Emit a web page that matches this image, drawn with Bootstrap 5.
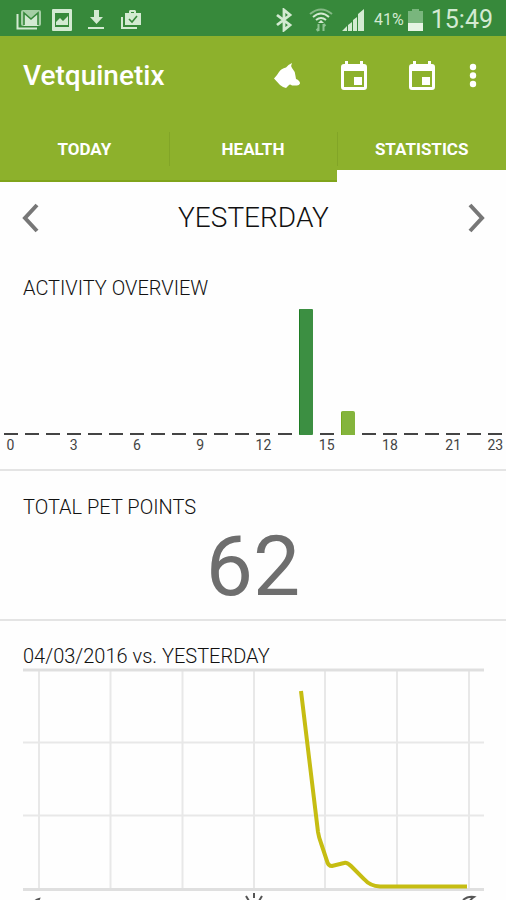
<!DOCTYPE html>
<html lang="en">
<head>
<meta charset="utf-8">
<meta name="viewport" content="width=device-width, initial-scale=1">
<title>Vetquinetix</title>
<link href="https://cdn.jsdelivr.net/npm/bootstrap@5.3.0/dist/css/bootstrap.min.css" rel="stylesheet">
<style>
  body { font-family: Roboto, "Noto Sans", sans-serif; color: #333; background: #fefefe; }
  svg { display: block; flex-shrink: 0; }
  .status-bar { height: 36px; background: #37893b; color: #d3ead2; padding: 3px 13px 0 16px; }
  .status-icons { gap: 10px; }
  .battery-text { font-size: 16px; line-height: 20px; }
  .clock { font-size: 25px; line-height: 32px; }
  .app-header { background: #8db12c; color: #fff; }
  .app-bar { height: 80px; padding: 0 20px 0 23px; }
  .app-title { font-size: 28px; line-height: 32px; font-weight: 500; }
  .icon-btn { color: inherit; line-height: 1; }
  .calendar-btn { margin-left: 40px; }
  .more-btn { margin-left: 24px; }
  .tab-item { height: 66px; padding: 2px 0 0; color: #fff; font-size: 17px; line-height: 20px; font-weight: 700; border-bottom: 2px solid #80a41b; }
  .tab-item + .tab-item { background: linear-gradient(#82a527, #82a527) 0 16px / 1px 34px no-repeat; }
  .tab-item.active { padding-top: 12px; border-bottom: 12px solid #fefefe; }
  .content { scrollbar-width: none; }
  .content::-webkit-scrollbar { display: none; }
  .date-bar { height: 69px; padding: 2px 19px 0 20px; color: #111; }
  .date-title { font-size: 28px; line-height: 36px; font-weight: 300; }
  .panel { border-bottom: 2px solid #e4e4e4; }
  .panel-title { font-size: 20px; line-height: 24px; padding: 0 23px; font-weight: 300; color: #111; }
  .activity { padding-top: 25px; padding-bottom: 14px; }
  .bars { height: 127px; margin-top: 8px; }
  .slot { flex: 1 1 0; width: 0; }
  .bar { width: 14px; height: 2px; background: #444; }
  .bar-high { background: #3c8f42; border-left: 1px solid #1f7c25; border-radius: 1px; }
  .bar-low { background: #84b43c; border-left: 1px solid #78a81d; border-radius: 2px 2px 0 0; }
  .hour { font-size: 14px; line-height: 20px; color: #444; }
  .points { padding-top: 24px; padding-bottom: 4px; }
  .points-value { font-size: 84px; line-height: 96px; color: #6e6e6e; }
  .compare { padding-top: 23px; }
  .plot { padding: 0 22px 0 23px; }
</style>
</head>
<body>
<div class="vh-100 d-flex flex-column overflow-hidden">
  <div class="status-bar flex-shrink-0 d-flex align-items-center justify-content-between">
    <div class="status-icons d-flex align-items-center">
      <svg width="26" height="22" viewBox="0 0 26 22" aria-hidden="true"><path d="M1.500 5v14.500H21" fill="none" stroke="#d3ead2" stroke-width="2"/><rect x="5" y="1" width="20" height="16" rx="2" fill="#a5cfa5"/><path d="M8 17V4l7 6 7-6v13" fill="#d3ead2"/><path d="M8 16V4l7 6 7-6v12" fill="none" stroke="#37893b" stroke-width="1.600"/></svg>
      <svg width="20" height="22" viewBox="0 0 20 22" aria-hidden="true"><path fill="#d3ead2" fill-rule="evenodd" d="M1 0h18a1 1 0 0 1 1 1v20a1 1 0 0 1-1 1H1a1 1 0 0 1-1-1V1a1 1 0 0 1 1-1zM3 4v14h14V4zM4 16v-3l4-4 3 3 5-5v9z"/></svg>
      <svg class="ms-1" width="20" height="22" viewBox="0 0 20 22" aria-hidden="true"><path fill="#d3ead2" d="M8 1h5v7h4l-6.500 7L4 8h4zM2 18h16v2H2z"/></svg>
      <svg class="ms-1" width="22" height="22" viewBox="0 0 22 22" aria-hidden="true"><path d="M2 8v11h15" fill="none" stroke="#d3ead2" stroke-width="2"/><path fill="#d3ead2" fill-rule="evenodd" d="M5 4h4V2l1-1h5l1 1v2h5v12H5zM11 4h3V3h-3z"/><path d="m9 10 3 3 5-6" fill="none" stroke="#37893b" stroke-width="1.600"/></svg>
    </div>
    <div class="d-flex align-items-center">
      <svg width="18" height="24" viewBox="0 0 18 24" aria-hidden="true"><path d="m2 7 13 10-6 5V2l6 5L2 17" fill="none" stroke="#d3ead2" stroke-width="2.800"/></svg>
      <svg class="ms-3" width="24" height="26" viewBox="0 0 24 26" aria-hidden="true"><g fill="none" stroke="#d3ead2" stroke-width="2"><path d="M1 7q11-9 22 0" opacity=".5"/><path d="M4 10q8-7 16 0M7 13q5-4 10 0"/></g><path d="M12 13l3 3h-6z" fill="#d3ead2"/><path d="M9.500 17v7m-2-2 2 2M14.500 24v-7m2 2-2-2" fill="none" stroke="#8fc493" stroke-width="2"/></svg>
      <svg class="ms-2" width="25" height="24" viewBox="0 0 25 24" aria-hidden="true"><path fill="#d3ead2" d="m1 23 5-5v5zM7 17l4-3v9H7zM12 12l4-3v14h-4zM17 6l6-5v22h-6z"/></svg>
      <span class="battery-text ms-2">41%</span>
      <svg class="ms-1" width="15" height="24" viewBox="0 0 15 24" aria-hidden="true"><path fill="#79b67d" d="M0 3h4V1h7v2h4v12H0z"/><path fill="#e6f4e4" d="M0 15h15v8H0z"/></svg>
      <span class="clock ms-2">15:49</span>
    </div>
  </div>

  <header class="app-header flex-shrink-0">
    <div class="app-bar d-flex align-items-center">
      <h1 class="app-title m-0 me-auto">Vetquinetix</h1>
      <button type="button" class="icon-btn btn p-0 border-0" aria-label="Pet"><svg width="26" height="26" viewBox="0 0 26 26"><path fill="currentColor" d="M18 0Q16.500 2.500 18 5Q21 8 21.500 13L22 16Q26 17.500 26 20.500Q25 23 22 22.500H18Q16 21 15 22L12 25Q9 24.500 6 22L0 15.500Q3 12.500 5 9Q7 5.500 12 4.500Q14 1.500 18 0Z"/></svg></button>
      <button type="button" class="icon-btn calendar-btn btn p-0 border-0" aria-label="Choose start date"><svg width="28" height="30" viewBox="0 0 28 30"><path fill="currentColor" fill-rule="evenodd" d="M5 0h3v3h12V0h3v3h1q3 0 3 3v20q0 3-3 3H4q-3 0-3-3V6q0-3 3-3h1zM4 10v16h20V10z"/><path fill="currentColor" d="M14 16h8v8h-8z"/></svg></button>
      <button type="button" class="icon-btn calendar-btn btn p-0 border-0" aria-label="Choose end date"><svg width="28" height="30" viewBox="0 0 28 30"><path fill="currentColor" fill-rule="evenodd" d="M5 0h3v3h12V0h3v3h1q3 0 3 3v20q0 3-3 3H4q-3 0-3-3V6q0-3 3-3h1zM4 10v16h20V10z"/><path fill="currentColor" d="M14 16h8v8h-8z"/></svg></button>
      <button type="button" class="icon-btn more-btn btn p-0 border-0" aria-label="More options"><svg width="26" height="28" viewBox="0 0 26 28"><g fill="currentColor"><circle cx="13" cy="5" r="3.200"/><circle cx="13" cy="13.500" r="3.200"/><circle cx="13" cy="22" r="3.200"/></g></svg></button>
    </div>
    <nav class="d-flex" aria-label="Sections">
      <a href="#today" class="tab-item w-100 d-flex align-items-center justify-content-center text-decoration-none">TODAY</a>
      <a href="#health" class="tab-item w-100 d-flex align-items-center justify-content-center text-decoration-none">HEALTH</a>
      <a href="#statistics" class="tab-item active w-100 d-flex align-items-center justify-content-center text-decoration-none" aria-current="page">STATISTICS</a>
    </nav>
  </header>

  <main class="content flex-grow-1 overflow-auto">
    <div class="date-bar d-flex align-items-center justify-content-between">
      <button type="button" class="icon-btn btn p-0 border-0" aria-label="Previous day"><svg width="20" height="30" viewBox="0 0 20 30"><path d="M17 2 5 15l12 13" fill="none" stroke="#777" stroke-width="4"/></svg></button>
      <h2 class="date-title m-0">YESTERDAY</h2>
      <button type="button" class="icon-btn btn p-0 border-0" aria-label="Next day"><svg width="20" height="30" viewBox="0 0 20 30"><path d="m3 2 12 13L3 28" fill="none" stroke="#777" stroke-width="4"/></svg></button>
    </div>

    <section class="panel activity">
      <h3 class="panel-title m-0">ACTIVITY OVERVIEW</h3>
      <div class="bars d-flex align-items-end" id="bars"></div>
      <div class="d-flex" id="hours"></div>
    </section>

    <section class="panel points">
      <h3 class="panel-title m-0">TOTAL PET POINTS</h3>
      <p class="points-value m-0 text-center">62</p>
    </section>

    <section class="compare">
      <h3 class="panel-title m-0">04/03/2016 vs. YESTERDAY</h3>
      <div class="plot">
        <svg class="w-100 h-auto" viewBox="23 668 461 252" role="img" aria-label="Activity comparison">
          <g fill="none" stroke="#e8e8e8" stroke-width="2">
            <path d="M39 670V889M110.500 670V889M182.500 670V889M254 670V889M325 670V889M397 670V889M469 670V889M23 742.500H484M23 815.500H484"/>
            <path d="M23 670H484M23 889.500H484" stroke="#dfdfdf" stroke-width="3"/>
          </g>
          <path d="M301 691 318 832Q319 838 321 843L327 861Q328 866 332 866L344 863Q347 862 351 866L364 879Q370 886 380 886.500H467" fill="none" stroke="#c6bd12" stroke-width="4"/>
          <g fill="none" stroke="#555" stroke-width="2">
            <path d="M39 899a8 8 0 1 0 9 11 8 8 0 0 1-9-11z"/>
            <circle cx="254" cy="908" r="6"/>
            <path d="M254 893v5M246 896l3 5M262 896l-3 5M238 908h5M265 908h5"/>
            <path d="M463 900q5-4 11-3-6 4-6 10"/>
          </g>
        </svg>
      </div>
    </section>
  </main>
</div>
<script>
  const activity = { 14: { size: 126, tone: "bar-high" }, 16: { size: 24, tone: "bar-low" } };
  const marks = [0, 3, 6, 9, 12, 15, 18, 21, 23];
  const bars = document.getElementById("bars");
  const hours = document.getElementById("hours");
  for (let h = 0; h < 24; h++) {
    const slot = document.createElement("div");
    slot.className = "slot d-flex justify-content-center";
    const bar = document.createElement("div");
    bar.className = "bar";
    if (activity[h]) {
      bar.classList.add(activity[h].tone);
      bar.style.height = activity[h].size + "px";
    }
    slot.append(bar);
    bars.append(slot);
    const label = document.createElement("div");
    label.className = "slot hour d-flex justify-content-center";
    label.textContent = marks.includes(h) ? h : "";
    hours.append(label);
  }
</script>
<script src="https://cdn.jsdelivr.net/npm/bootstrap@5.3.0/dist/js/bootstrap.bundle.min.js"></script>
</body>
</html>
